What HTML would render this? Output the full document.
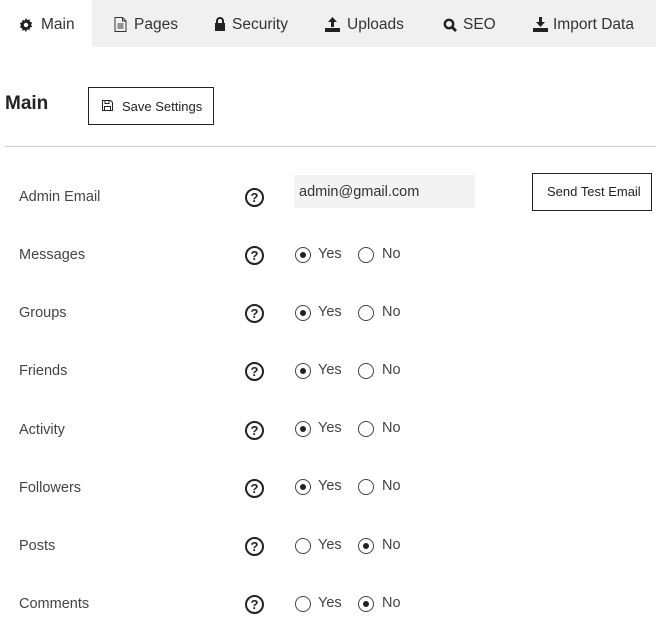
<!DOCTYPE html>
<html><head><style>
body{margin:0;width:656px;height:627px;background:#fff;font-family:"Liberation Sans",sans-serif;color:#333;position:relative;overflow:hidden}
.tabs{position:absolute;left:0;top:0;width:656px;height:47px;background:#f0f0f0}
.act{position:absolute;left:0;top:0;width:92px;height:47px;background:#fff}
.t{position:absolute;top:16px;font-size:15.5px;color:#333;white-space:nowrap}
.ic{position:absolute;top:17px}
h2{position:absolute;left:5px;top:93px;margin:0;font-size:19px;font-weight:bold;color:#222}
.btn{position:absolute;border:1px solid #222;font-size:13px;color:#222;box-sizing:border-box;background:#fff}
.hr{position:absolute;left:5px;top:146px;width:651px;height:1px;background:#ccc}
.lbl{position:absolute;left:19px;font-size:14.5px;color:#444}
.q{position:absolute;left:245px;width:15px;height:15px;border:2px solid #222;border-radius:50%;font-size:13px;font-weight:bold;text-align:center;line-height:15px;color:#222}
.r{position:absolute;width:14px;height:14px;border:1px solid #444;border-radius:50%;box-sizing:content-box}
.r.on::after{content:"";position:absolute;left:4px;top:4px;width:6px;height:6px;border-radius:50%;background:#222}
.o{position:absolute;font-size:14.5px;color:#444}
</style></head><body>
<div class="tabs"><div class="act"></div>
<svg class="ic" style="left:19px;top:18px" width="14" height="14" viewBox="0 0 14 14"><path d="M7 0l1.3 2 2.3-.6.3 2.3 2.2.9-1 2.1 1 2.1-2.2.9-.3 2.3-2.3-.6L7 14l-1.3-2-2.3.6-.3-2.3-2.2-.9 1-2.1-1-2.1 2.2-.9.3-2.3 2.3.6z" fill="#222"/><circle cx="7" cy="7" r="2.2" fill="#fff"/></svg>
<span class="t" style="left:41px">Main</span>
<svg class="ic" style="left:114px" width="13" height="15" viewBox="0 0 13 15"><path d="M1 .5h7.5l3.5 3.5v10.5H1z M8.5.5V4H12" fill="none" stroke="#333"/><path d="M3.5 7h6M3.5 9h6M3.5 11h6" stroke="#333"/></svg>
<span class="t" style="left:134px">Pages</span>
<svg class="ic" style="left:214px" width="12" height="14" viewBox="0 0 12 14"><path d="M3 6V4a3 3 0 0 1 6 0v2" fill="none" stroke="#222" stroke-width="2"/><rect x="1" y="6" width="10" height="8" fill="#222"/></svg>
<span class="t" style="left:232px">Security</span>
<svg class="ic" style="left:325px" width="15" height="15" viewBox="0 0 15 15"><path d="M7.5 0l4.5 5H9v5H6V5H3z" fill="#222"/><path d="M0 11h15v4H0z" fill="#222"/></svg>
<span class="t" style="left:347px">Uploads</span>
<svg class="ic" style="left:443px;top:18px" width="14" height="14" viewBox="0 0 14 14"><circle cx="6" cy="6" r="4.2" fill="none" stroke="#222" stroke-width="2.4"/><path d="M9 9l4 4" stroke="#222" stroke-width="2.8"/></svg>
<span class="t" style="left:463px">SEO</span>
<svg class="ic" style="left:533px" width="15" height="15" viewBox="0 0 15 15"><path d="M6 0h3v5h3l-4.5 5L3 5h3z" fill="#222"/><path d="M0 11h15v4H0z" fill="#222"/></svg>
<span class="t" style="left:553px">Import Data</span>
</div>
<h2>Main</h2>
<div class="btn" style="left:88px;top:87px;width:126px;height:38px;padding:11px 0 0 33px">Save Settings</div>
<svg style="position:absolute;left:102px;top:100px" width="11" height="11" viewBox="0 0 11 11"><path d="M.5.5h8l2 2v8H.5z" fill="none" stroke="#222"/><path d="M3 .5v3h4v-3M2.5 10.5v-4h6v4" fill="none" stroke="#222"/></svg>
<div class="hr"></div>
<div style="position:absolute;left:294px;top:175px;width:181px;height:33px;background:#f3f3f3"></div>
<span class="o" style="left:299px;top:184px;color:#333">admin@gmail.com</span>
<div class="btn" style="left:532px;top:173px;width:120px;height:38px;padding:10px 0 0 14px">Send Test Email</div>
<div class="lbl" style="top:189px">Admin Email</div>
<div class="q" style="top:188px">?</div>
<div class="lbl" style="top:247px">Messages</div><div class="q" style="top:246px">?</div>
<div class="r on" style="left:295px;top:247px"></div><span class="o" style="left:318px;top:246px">Yes</span><div class="r" style="left:358px;top:247px"></div><span class="o" style="left:382px;top:246px">No</span>
<div class="lbl" style="top:305px">Groups</div><div class="q" style="top:304px">?</div>
<div class="r on" style="left:295px;top:305px"></div><span class="o" style="left:318px;top:304px">Yes</span><div class="r" style="left:358px;top:305px"></div><span class="o" style="left:382px;top:304px">No</span>
<div class="lbl" style="top:363px">Friends</div><div class="q" style="top:362px">?</div>
<div class="r on" style="left:295px;top:363px"></div><span class="o" style="left:318px;top:362px">Yes</span><div class="r" style="left:358px;top:363px"></div><span class="o" style="left:382px;top:362px">No</span>
<div class="lbl" style="top:422px">Activity</div><div class="q" style="top:421px">?</div>
<div class="r on" style="left:295px;top:421px"></div><span class="o" style="left:318px;top:420px">Yes</span><div class="r" style="left:358px;top:421px"></div><span class="o" style="left:382px;top:420px">No</span>
<div class="lbl" style="top:480px">Followers</div><div class="q" style="top:479px">?</div>
<div class="r on" style="left:295px;top:479px"></div><span class="o" style="left:318px;top:478px">Yes</span><div class="r" style="left:358px;top:479px"></div><span class="o" style="left:382px;top:478px">No</span>
<div class="lbl" style="top:538px">Posts</div><div class="q" style="top:537px">?</div>
<div class="r" style="left:295px;top:538px"></div><span class="o" style="left:318px;top:537px">Yes</span><div class="r on" style="left:358px;top:538px"></div><span class="o" style="left:382px;top:537px">No</span>
<div class="lbl" style="top:596px">Comments</div><div class="q" style="top:595px">?</div>
<div class="r" style="left:295px;top:596px"></div><span class="o" style="left:318px;top:595px">Yes</span><div class="r on" style="left:358px;top:596px"></div><span class="o" style="left:382px;top:595px">No</span>
</body></html>
